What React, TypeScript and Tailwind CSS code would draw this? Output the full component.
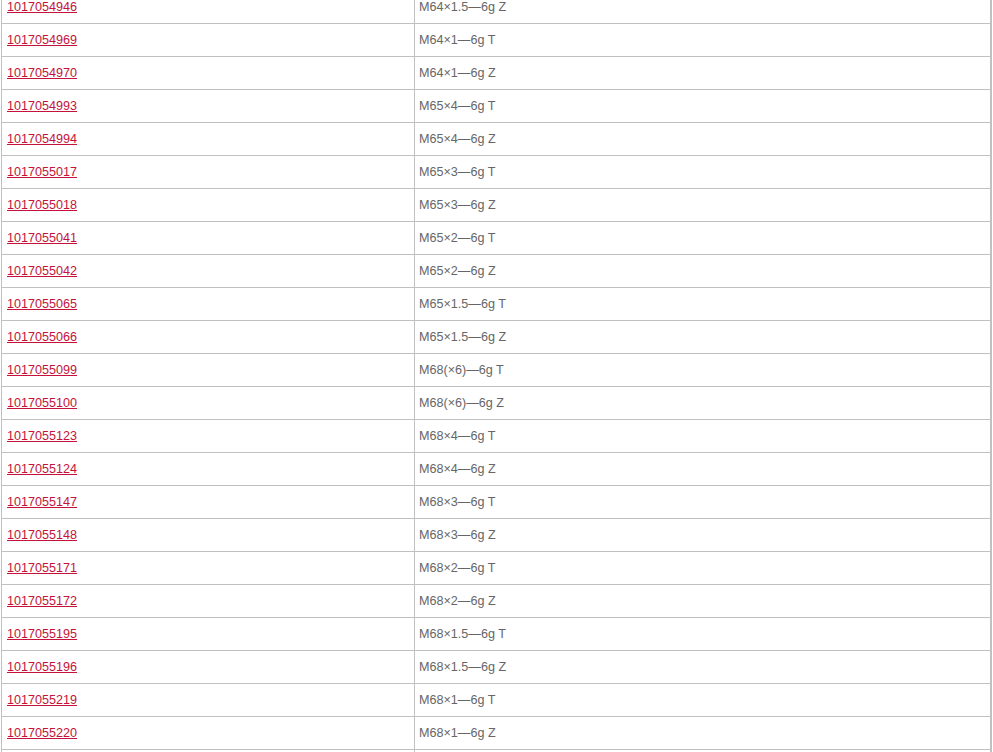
import React from "react";

const rows: [string, string][] = [
  ["1017054946", "M64×1.5—6g Z"],
  ["1017054969", "M64×1—6g T"],
  ["1017054970", "M64×1—6g Z"],
  ["1017054993", "M65×4—6g T"],
  ["1017054994", "M65×4—6g Z"],
  ["1017055017", "M65×3—6g T"],
  ["1017055018", "M65×3—6g Z"],
  ["1017055041", "M65×2—6g T"],
  ["1017055042", "M65×2—6g Z"],
  ["1017055065", "M65×1.5—6g T"],
  ["1017055066", "M65×1.5—6g Z"],
  ["1017055099", "M68(×6)—6g T"],
  ["1017055100", "M68(×6)—6g Z"],
  ["1017055123", "M68×4—6g T"],
  ["1017055124", "M68×4—6g Z"],
  ["1017055147", "M68×3—6g T"],
  ["1017055148", "M68×3—6g Z"],
  ["1017055171", "M68×2—6g T"],
  ["1017055172", "M68×2—6g Z"],
  ["1017055195", "M68×1.5—6g T"],
  ["1017055196", "M68×1.5—6g Z"],
  ["1017055219", "M68×1—6g T"],
  ["1017055220", "M68×1—6g Z"],
  ["", ""],
];

export default function App() {
  return (
    <div
      className="w-[993px] h-[752px] overflow-hidden bg-white"
      style={{ fontFamily: '"Liberation Sans", Arial, sans-serif' }}
    >
      <div className="ml-[1px] w-[991px] -mt-[9px] border-l border-r-2 border-[#c0c0c0]">
        {rows.map(([code, spec], i) => (
          <div key={i} className="flex h-[33px] border-b border-[#c0c0c0]">
            <div className="w-[413px] border-r border-[#c0c0c0] pl-[5px] flex items-center">
              {code && (
                <a
                  href="#"
                  className="text-[12.6px] text-[#c4123a] underline leading-none"
                >
                  {code}
                </a>
              )}
            </div>
            <div className="flex-1 pl-[4px] flex items-center text-[12.6px] text-[#666666] leading-none">
              {spec}
            </div>
          </div>
        ))}
      </div>
    </div>
  );
}
